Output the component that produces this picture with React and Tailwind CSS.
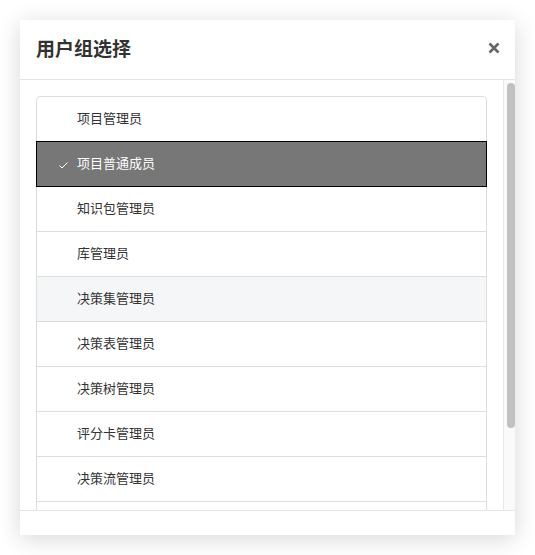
import React from 'react';

const groups = [
  '项目管理员',
  '项目普通成员',
  '知识包管理员',
  '库管理员',
  '决策集管理员',
  '决策表管理员',
  '决策树管理员',
  '评分卡管理员',
  '决策流管理员',
  '变量库管理员',
  '规则集管理员',
];

const selected = '项目普通成员';
const hovered = '决策集管理员';

function Row({ name, first, last }) {
  const isSel = name === selected;
  const isHover = name === hovered;

  let cls = 'relative flex items-center box-border pl-[40px] pb-[2px] text-[13px] border-x border-b ';
  if (isSel) {
    cls += '-mt-px h-[46px] border-t border-black bg-[#777777] text-white';
  } else {
    cls += 'border-[#dddddd] text-[#333333] ';
    cls += first ? 'h-[46px] border-t rounded-t-[4px] ' : 'h-[45px] ';
    cls += last ? 'rounded-b-[4px] ' : '';
    cls += isHover ? 'bg-[#f5f6f8]' : 'bg-white';
  }

  return (
    <li className={cls}>
      {isSel && (
        <svg
          className="absolute left-[22px] top-[20px]"
          width="9"
          height="7"
          viewBox="0 0 9 7"
          fill="none"
        >
          <polyline points="0.5,3.5 3,6 8.5,0.5" stroke="#ffffff" strokeWidth="1" />
        </svg>
      )}
      {name}
    </li>
  );
}

export default function App() {
  return (
    <div
      className="min-h-screen bg-white p-[20px] pr-0"
      style={{ fontFamily: '"Noto Sans CJK SC", "Noto Sans", sans-serif' }}
    >
      <div className="w-[495px] h-[515px] flex flex-col bg-white shadow-[0_4px_22px_rgba(0,0,0,0.16)]">
        {/* header */}
        <div className="h-[60px] shrink-0 flex items-center justify-between pl-[16px] pr-[15px] border-b border-[#e5e5e5]">
          <h1 className="text-[19px] font-bold text-[#333333] leading-none pb-[4px]">用户组选择</h1>
          <svg width="12" height="12" viewBox="0 0 12 12" className="mb-[4px]">
            <path d="M1.5 1.5 L10.5 10.5 M10.5 1.5 L1.5 10.5" stroke="#666666" strokeWidth="2.6" />
          </svg>
        </div>

        {/* body */}
        <div className="flex-1 min-h-0 flex">
          <div className="flex-1 min-w-0 overflow-hidden p-[16px]">
            <ul>
              {groups.map((g, i) => (
                <Row key={g} name={g} first={i === 0} last={i === groups.length - 1} />
              ))}
            </ul>
          </div>
          {/* scrollbar */}
          <div className="w-[12px] shrink-0 bg-[#fafafa] border-l border-[#e8e8e8] pt-[3px] pl-[3px]">
            <div className="w-[8px] h-[345px] rounded-full bg-[#c1c1c1]" />
          </div>
        </div>

        {/* footer */}
        <div className="h-[24px] shrink-0 border-t border-[#e5e5e5] box-content" />
      </div>
    </div>
  );
}
